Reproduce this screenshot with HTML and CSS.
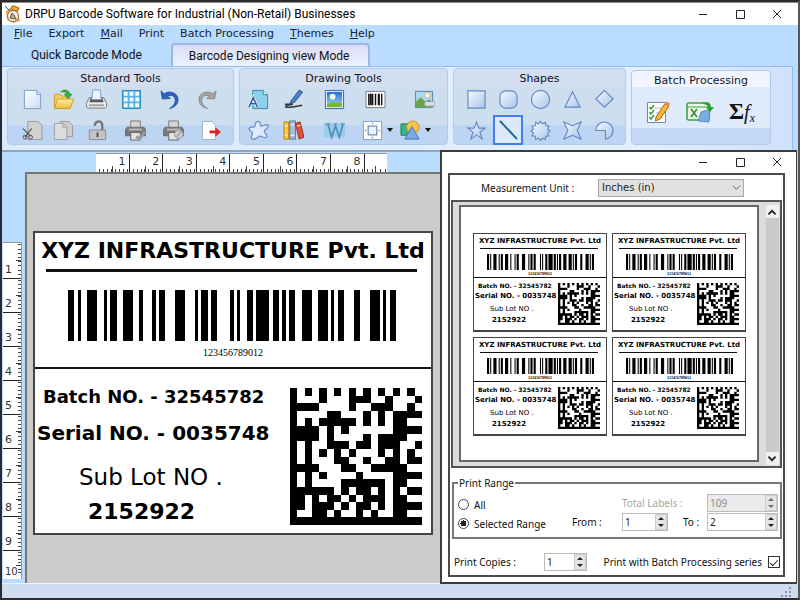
FILE: index.html
```
<!DOCTYPE html>
<html lang="en">
<head>
<meta charset="utf-8">
<title>DRPU Barcode Software for Industrial (Non-Retail) Businesses</title>
<link rel="stylesheet" href="styles.css">
</head>
<body>
<svg class="defs" aria-hidden="true">
  <defs>
    <linearGradient id="blue" x1="0" y1="0" x2="1" y2="1"><stop offset="0" stop-color="#f4f9ff"/><stop offset="1" stop-color="#a9c6ea"/></linearGradient>
    <linearGradient id="paper" x1="0" y1="0" x2="1" y2="1"><stop offset="0" stop-color="#ffffff"/><stop offset="1" stop-color="#c9dcf6"/></linearGradient>
    <linearGradient id="gold" x1="0" y1="0" x2="0" y2="1"><stop offset="0" stop-color="#fff0a8"/><stop offset="1" stop-color="#f0bb38"/></linearGradient>
    <linearGradient id="sky" x1="0" y1="0" x2="0" y2="1"><stop offset="0" stop-color="#1c6fd8"/><stop offset="1" stop-color="#a6dcff"/></linearGradient>
  </defs>
  <symbol id="barcode" viewBox="0 0 101 1" preserveAspectRatio="none">
    <path d="M0 .5H101" stroke="#000" stroke-width="1" stroke-dasharray="2 1 1 2 3 2 1 1 2 2 3 2 1 3 1 1 2 3 3 3 1 1 2 1 2 4 1 1 1 2 2 1 4 1 2 1 1 1 2 2 3 2 3 1 1 1 2 3 2 3 3 1 1 1 2"/>
  </symbol>
  <symbol id="matrix" viewBox="0 0 18 18" preserveAspectRatio="none">
    <path stroke="#000" stroke-width="1" fill="none" d="M0 .5h1m1 0h1m1 0h1m1 0h1m1 0h1m1 0h1m1 0h1m1 0h1m1 0h1
      M0 1.5h1m3 0h1m3 0h3m2 0h1m3 0h1 M0 2.5h4m4 0h1m2 0h3m2 0h1
      M0 3.5h1m4 0h2m3 0h1m1 0h1m1 0h4 M0 4.5h1m1 0h1m1 0h5m1 0h1m1 0h1m1 0h2
      M0 5.5h4m1 0h1m1 0h1m6 0h4 M0 6.5h4m1 0h1m4 0h1m1 0h4
      M0 7.5h1m1 0h1m2 0h3m1 0h2m1 0h3m2 0h1 M0 8.5h1m1 0h1m1 0h1m1 0h1m1 0h1m3 0h1m1 0h1m1 0h1
      M0 9.5h1m1 0h1m3 0h2m2 0h1m2 0h2m1 0h2 M0 10.5h4m3 0h2m2 0h5
      M0 11.5h1m1 0h1m1 0h1m4 0h1m4 0h4 M0 12.5h1m1 0h1m4 0h6m1 0h2
      M0 13.5h6m1 0h1m1 0h2m1 0h1m1 0h1m1 0h2 M0 14.5h2m1 0h1m1 0h2m1 0h1m1 0h3m1 0h2
      M0 15.5h2m1 0h3m1 0h1m1 0h2m1 0h1m1 0h4 M0 16.5h1m2 0h2m1 0h1m2 0h1m1 0h1m2 0h2 M0 17.5h18"/>
  </symbol>
</svg>

<div class="window">
  <header class="titlebar">
    <svg class="app-icon" viewBox="0 0 18 18"><path d="M2 6 10 0 16 3 14 8 16 16 9 18 3 15z" fill="#e3a655"/><circle cx="9" cy="11" r="5.500" fill="#f6efe0" stroke="#9a6a35"/><path d="M1 1l5 5M6 13l2-5 2 2 2 4z" stroke="#555" fill="#c9ae80"/><path d="M8 1l7 2-3 3-5-2z" fill="#f4b233" stroke="#7e4414" stroke-width=".6"/></svg>
    <h1>DRPU Barcode Software for Industrial (Non-Retail) Businesses</h1>
    <div class="controls">
      <button aria-label="Minimize"><svg viewBox="0 0 10 10"><path d="M1 5.500h8"/></svg></button>
      <button aria-label="Maximize"><svg viewBox="0 0 10 10"><path d="M1.500 1.500h8v8h-8z"/></svg></button>
      <button aria-label="Close"><svg viewBox="0 0 10 10"><path d="M1 1l8 8M9 1l-8 8"/></svg></button>
    </div>
  </header>

  <nav class="menu">
    <a href="#"><u>F</u>ile</a><a href="#">Export</a><a href="#"><u>M</u>ail</a><a href="#">Print</a><a href="#">Batch Processing</a><a href="#"><u>T</u>hemes</a><a href="#"><u>H</u>elp</a>
  </nav>

  <div class="tabs">
    <button class="tab">Quick Barcode Mode</button>
    <button class="tab active">Barcode Designing view Mode</button>
  </div>

  <div class="ribbon">
    <section class="group standard">
      <h2>Standard Tools</h2>
      <div class="tools">
        <button aria-label="New"><svg viewBox="0 0 22 22"><path d="M2.500 1.500h13l4 4v15h-17z" fill="url(#paper)" stroke="#7d9cc8"/><path d="M15.500 1.500v4h4" fill="#dbe8fa" stroke="#7d9cc8"/></svg></button>
        <button aria-label="Open"><svg viewBox="0 0 22 22"><path d="M1.500 20V5.500h6l2 2h8V20z" fill="#f6cf62" stroke="#c99a2e"/><path d="M1.500 20.500 5 10.500h16.500l-3.500 10z" fill="url(#gold)" stroke="#c99a2e"/><path d="M8 3c5-4 9-1 9.500 2.500H20L15.500 10 12 5.500h2.500C14 3 11 2.500 8 3z" fill="#35b33a" stroke="#1b8425" stroke-width=".7"/></svg></button>
        <button aria-label="Print"><svg viewBox="0 0 22 22"><path d="M3.500 9h15l3 6v3q0 2-2 2h-17q-2 0-2-2v-3z" fill="#ececec" stroke="#777"/><path d="M5 9h12l1.500 5h-15z" fill="#555b66"/><path d="M7 1h8l1 10H6z" fill="#eaf3ff" stroke="#7f9bc2"/><path d="M3 17h16" stroke="#a5a5a5" stroke-width="2"/></svg></button>
        <button aria-label="Grid"><svg viewBox="0 0 22 22"><path d="M1.500 1.500h19v19h-19z" fill="#58b4e4"/><path fill="#f4fbff" d="M3 3h4v4H3zm6 0h4v4H9zm6 0h4v4h-4zM3 9h4v4H3zm6 0h4v4H9zm6 0h4v4h-4zM3 15h4v4H3zm6 0h4v4H9zm6 0h4v4h-4z"/><path d="M1.500 1.500h19v19h-19z" fill="none" stroke="#2a85bd"/></svg></button>
        <button aria-label="Undo"><svg viewBox="0 0 22 22"><path d="M2 2l1.500 8.500L12 10 9 7.500c4-2 8 0 8 4.500 0 3-2 6-6 8.500 6-1.500 9-5 9-9.500C20 4 11 1 5.500 5z" fill="#2c62bd" stroke="#1a438f" stroke-width=".7"/></svg></button>
        <button aria-label="Redo"><svg viewBox="0 0 22 22"><path d="M20 2l-1.500 8.500L10 10l3-2.500C9 5.500 5 7.500 5 12c0 3 2 6 6 8.500C5 19 2 15.500 2 11 2 4 11 1 16.500 5z" fill="#a3a3a3" stroke="#7a7a7a" stroke-width=".7"/></svg></button>
      </div>
      <div class="tools second">
        <button aria-label="Cut"><svg viewBox="0 0 22 22"><path d="M6 1.500h11l4 4v15H6z" fill="#d0d0d0" stroke="#999"/><path d="M1 9l8 8M10 9l-7 9" stroke="#555" stroke-width="1.200"/><circle cx="3" cy="18" r="2" fill="none" stroke="#555"/><circle cx="9" cy="18" r="2" fill="none" stroke="#555"/></svg></button>
        <button aria-label="Copy"><svg viewBox="0 0 22 22"><path d="M7.500 1.500h9l4 4v12h-13z" fill="#ccc" stroke="#999"/><path d="M1.500 3.500h9l4 4v13h-13z" fill="#dcdcdc" stroke="#a0a0a0"/><path d="M10.500 3.500v4h4" fill="none" stroke="#a0a0a0"/></svg></button>
        <button aria-label="Unlock"><svg viewBox="0 0 22 22"><path d="M8 6c1-6 9-6 8 1v4" fill="none" stroke="#777" stroke-width="2.500"/><path d="M2.500 10.500h17v10h-17z" fill="#c4c4c4" stroke="#888"/><path d="M11 13v5" stroke="#555" stroke-width="2"/></svg></button>
        <button aria-label="Print setup"><svg viewBox="0 0 22 22"><path d="M6 1h10v7H6z" fill="#d5d5d5" stroke="#777"/><path d="M2 7h18l2 3v7H0v-7z" fill="#777"/><path d="M4 10h14" stroke="#bbb" stroke-width="2"/><path d="M6 13h10v8H6z" fill="#e2e2e2" stroke="#666"/><path d="M12 17l3 3 6-8" fill="none" stroke="#999" stroke-width="3"/></svg></button>
        <button aria-label="Edit printer"><svg viewBox="0 0 22 22"><path d="M6 1h10v7H6z" fill="#d5d5d5" stroke="#777"/><path d="M2 7h18l2 3v7H0v-7z" fill="#777"/><path d="M4 10h14" stroke="#bbb" stroke-width="2"/><path d="M6 13h10v8H6z" fill="#e2e2e2" stroke="#666"/><circle cx="16.500" cy="15" r="4.500" fill="#ccc" stroke="#999"/><path d="M14 18l5-6" stroke="#888"/></svg></button>
        <button aria-label="Exit"><svg viewBox="0 0 22 22"><path d="M2.500 1.500h10l4 4v15h-14z" fill="#fcfdff" stroke="#9aaeca"/><path d="M10 11h6V7.500l6 5-6 5V14h-6z" fill="#d8221b"/></svg></button>
      </div>
    </section>

    <section class="group drawing">
      <h2>Drawing Tools</h2>
      <div class="tools">
        <button aria-label="Text"><svg viewBox="0 0 22 22"><path d="M5 1.500h11l4.500 4.500v14.500H5z" fill="#8cd0ec" stroke="#3186b0"/><path d="M16 1.500V6h4.500" fill="#dff5ff" stroke="#3186b0"/><path d="M1 19l4.500-10L10 19M3 15.500h5" fill="none" stroke="#fff" stroke-width="3"/><path d="M1 19l4.500-10L10 19M3 15.500h5" fill="none" stroke="#315a96" stroke-width="1.600"/></svg></button>
        <button aria-label="Pencil"><svg viewBox="0 0 22 22"><path d="M8 13 17 1l3.500 2.500L12 14l-4.500 1.500z" fill="#4a82c4" stroke="#28508c"/><path d="M2 16h7c4 0-8 1-6 3 2 1 9-.5 17-2" fill="none" stroke="#333" stroke-width="1.500"/></svg></button>
        <button aria-label="Picture"><svg viewBox="0 0 22 22"><path d="M1.500 1.500h19v19h-19z" fill="#fff" stroke="#2b5eb0"/><path d="M3 3h16v16H3z" fill="url(#sky)"/><path d="M3 16c5-3 11-2 16-1v4H3z" fill="#79b92c"/><circle cx="9" cy="8" r="3" fill="#fffde0"/></svg></button>
        <button aria-label="Barcode"><svg viewBox="0 0 22 22"><path d="M1 2.500h20v17H1z" fill="#fff" stroke="#777"/><path d="M4 5v12M8 5v12M11 5v12M17.500 5v12" stroke="#111" stroke-width="1.500"/><path d="M6 5v12M14.500 5v12" stroke="#111" stroke-width="2.200"/></svg></button>
        <button aria-label="Image library"><svg viewBox="0 0 22 22"><path d="M1.500 2.500h18v17h-18z" fill="#abd9f2" stroke="#5287a8"/><path d="M2 13l5-4 5 4 4-2 3 3v5H2z" fill="#6aa644"/><circle cx="14" cy="6.500" r="3" fill="#fff2d8" stroke="#d7ac85"/><rect x="11" y="13" width="11" height="5" rx="2" fill="#d9dde3" stroke="#8f98a5"/></svg></button>
      </div>
      <div class="tools second">
        <button aria-label="Freeform"><svg viewBox="0 0 22 22"><path d="M9 2c4-2 4 3 4.500 4.500C17 6 22 3 21 7c-1 3-4 3-4 5s4 3 2.500 6c-1 2-5-1-7-1s-4 4-8 3c-3-1 1-5 0-7C3.500 11.500 0 11 1.500 8.500 3 7 6 8 7 7s0-4 2-5z" fill="#dfeafb" stroke="#688dc8" stroke-width="1.300"/></svg></button>
        <button aria-label="Library"><svg viewBox="0 0 22 22"><path d="M1 2h5v18H1z" fill="#ffc640" stroke="#b88211"/><path d="M7 1h6v19H7z" fill="#a9bddb" stroke="#587099"/><path d="M13 3.500 18 2l4 16-5 2z" fill="#e2503c" stroke="#9c2a1a"/><path d="M2 6h3M2 16h3M8 5h4M8 16h4M14.500 6.500l4-1" stroke="#fff"/></svg></button>
        <button aria-label="WordArt"><svg viewBox="0 0 22 22"><path d="M0 4h22v14H0z" fill="#9dcbe9"/><path d="M4 4l4 14 4-12 4 12 4-14" fill="none" stroke="#4a90be" stroke-width="1.800"/><path d="M1 4h6M10 4h4M17 4h5" stroke="#4a90be"/></svg></button>
        <button class="drop" aria-label="Align"><svg viewBox="0 0 22 22"><path d="M1.500 1.500h19v19h-19z" fill="#fff" stroke="#809bcb"/><path d="M6.500 6.500h9v9h-9z" fill="#eef4ff" stroke="#6d8dbd" stroke-width="1.300"/><path d="M11 3v1.500M11 17.500V19M3 11h1.500M17.500 11H19" stroke="#6d8dbd" stroke-width="1.500"/></svg><i></i></button>
        <button class="drop" aria-label="Arrange"><svg viewBox="0 0 22 22"><path d="M1 4h9v12H1z" fill="#35b681" stroke="#198453"/><circle cx="13.500" cy="7.500" r="6.500" fill="#f7c34f" stroke="#c89021"/><path d="M12.500 7l7.500 13H5z" fill="#7fa9e2" stroke="#4470ad"/></svg><i></i></button>
      </div>
    </section>

    <section class="group shapes">
      <h2>Shapes</h2>
      <div class="tools">
        <button aria-label="Rectangle"><svg viewBox="0 0 22 22"><path d="M2 2h18v18H2z"/></svg></button>
        <button aria-label="Rounded rectangle"><svg viewBox="0 0 22 22"><rect x="2" y="2" width="18" height="18" rx="6"/></svg></button>
        <button aria-label="Circle"><svg viewBox="0 0 22 22"><circle cx="11" cy="11" r="9.500"/></svg></button>
        <button aria-label="Triangle"><svg viewBox="0 0 22 22"><path d="M11 3l8 16H3z"/></svg></button>
        <button aria-label="Diamond"><svg viewBox="0 0 22 22"><path d="M11 1.500 20 10.500 11 19 2 10.500z"/></svg></button>
      </div>
      <div class="tools second">
        <button aria-label="Star"><svg viewBox="0 0 22 22"><path d="M11 2l2.400 6.500H20l-5.300 4.200L17 20l-6-4.400L5 20l2.300-7.300L2 8.500h6.600z"/></svg></button>
        <button class="picked" aria-label="Line"><svg viewBox="0 0 22 22"><path d="M2 1l18 19" stroke-width="2"/></svg></button>
        <button aria-label="Burst"><svg viewBox="0 0 22 22"><path d="M11 1.500l2 2.500 3-1.500.5 3.300 3.300.7L18.500 9.500l2.500 2-2.500 2 1.300 3-3.300.5-.5 3.300-3-1.300-2 2.500-2-2.500-3 1.300-.5-3.300-3.300-.5 1.300-3-2.500-2 2.500-2-1.300-3 3.300-.7.5-3.300 3 1.500z"/></svg></button>
        <button aria-label="Four-point star"><svg viewBox="0 0 22 22"><path d="M2 2 11 6l9-4-4 9 4 9-9-4-9 4 4-9z"/></svg></button>
        <button aria-label="Pie"><svg viewBox="0 0 22 22"><path d="M2 10a9 9 0 1 1 10 10v-9H2z"/></svg></button>
      </div>
    </section>

    <section class="group batch">
      <h2>Batch Processing</h2>
      <div class="tools">
        <button aria-label="Edit list"><svg viewBox="0 0 24 24"><path d="M1.500 2.500h18v20h-18z" fill="#fff" stroke="#7188ad"/><path d="M3.500 7l1.500 2 3-4M3.500 12l1.500 2 3-4M3.500 17l1.500 2 3-4" fill="none" stroke="#35a13b" stroke-width="1.500"/><path d="M9 8h7M10 13h4M10 18h7" stroke="#aab9d0"/><path d="M10 17 19 3.500l4 2.500-9 13-4.500 2z" fill="#f6b931" stroke="#a4651c"/><path d="M19 3.500l1.500-2 3.500 2-1 2.500z" fill="#e88b72"/></svg></button>
        <button class="wide" aria-label="Import spreadsheet"><svg viewBox="0 0 28 24"><rect x="1" y="3" width="22" height="17" rx="2" fill="#e8f7e4" stroke="#43a047" stroke-width="1.600"/><path d="M1 7h22" stroke="#43a047"/><path d="M5 9l6 8M11 9l-6 8" stroke="#338a3a" stroke-width="1.500"/><path d="M15 12l9-3-1 13-11-1z" fill="#75afe0" stroke="#4e83b8" stroke-width=".8"/><path d="M16 4c5-3 9-1 9 3h3l-4 5-4-5h2c0-2-3-3-6-3z" fill="#24a12e"/></svg></button>
        <button class="formula" aria-label="Formula">Σ<em>f<sub>x</sub></em></button>
      </div>
    </section>
  </div>

  <main class="workspace">
    <ol class="ruler across"><li>1</li><li>2</li><li>3</li><li>4</li><li>5</li><li>6</li><li>7</li><li>8</li><li></li></ol>
    <ol class="ruler down"><li>1</li><li>2</li><li>3</li><li>4</li><li>5</li><li>6</li><li>7</li><li>8</li><li>9</li><li>10</li></ol>
    <div class="canvas">
      <article class="label large">
        <h3>XYZ INFRASTRUCTURE Pvt. Ltd</h3>
        <hr>
        <svg class="bars"><use href="#barcode"/></svg>
        <p class="code">123456789012</p>
        <div class="details">
          <div class="lines">
            <p class="lot">Batch NO. - 32545782</p>
            <p class="serial">Serial NO. - 0035748</p>
            <p class="sub">Sub Lot NO .</p>
            <p class="number">2152922</p>
          </div>
          <svg class="dots"><use href="#matrix"/></svg>
        </div>
      </article>
    </div>
  </main>

  <footer class="status"><svg viewBox="0 0 12 12"><path fill="#8796ad" d="M9 1h2v2H9zM5 5h2v2H5zm4 0h2v2H9zM1 9h2v2H1zm4 0h2v2H5zm4 0h2v2H9z"/></svg></footer>
</div>

<div class="dialog" role="dialog" aria-label="Print">
  <div class="controls">
    <button aria-label="Minimize"><svg viewBox="0 0 10 10"><path d="M1 5.500h8"/></svg></button>
    <button aria-label="Maximize"><svg viewBox="0 0 10 10"><path d="M1.500 1.500h8v8h-8z"/></svg></button>
    <button aria-label="Close"><svg viewBox="0 0 10 10"><path d="M1 1l8 8M9 1l-8 8"/></svg></button>
  </div>
  <form class="panel">
    <div class="unit">
      <label for="unit">Measurement Unit :</label>
      <span class="select"><select id="unit"><option>Inches (in)</option></select><svg viewBox="0 0 10 10"><path d="M1 3l4 4 4-4"/></svg></span>
    </div>
    <div class="preview">
      <div class="sheet">
        <article class="label small">
          <h3>XYZ INFRASTRUCTURE Pvt. Ltd</h3><hr>
          <svg class="bars"><use href="#barcode"/></svg>
          <p class="code">123456789012</p>
          <div class="details"><div class="lines"><p class="lot">Batch NO. - 32545782</p><p class="serial">Serial NO. - 0035748</p><p class="sub">Sub Lot NO .</p><p class="number">2152922</p></div><svg class="dots"><use href="#matrix"/></svg></div>
        </article>
        <article class="label small">
          <h3>XYZ INFRASTRUCTURE Pvt. Ltd</h3><hr>
          <svg class="bars"><use href="#barcode"/></svg>
          <p class="code">123456789012</p>
          <div class="details"><div class="lines"><p class="lot">Batch NO. - 32545782</p><p class="serial">Serial NO. - 0035748</p><p class="sub">Sub Lot NO .</p><p class="number">2152922</p></div><svg class="dots"><use href="#matrix"/></svg></div>
        </article>
        <article class="label small">
          <h3>XYZ INFRASTRUCTURE Pvt. Ltd</h3><hr>
          <svg class="bars"><use href="#barcode"/></svg>
          <p class="code">123456789012</p>
          <div class="details"><div class="lines"><p class="lot">Batch NO. - 32545782</p><p class="serial">Serial NO. - 0035748</p><p class="sub">Sub Lot NO .</p><p class="number">2152922</p></div><svg class="dots"><use href="#matrix"/></svg></div>
        </article>
        <article class="label small">
          <h3>XYZ INFRASTRUCTURE Pvt. Ltd</h3><hr>
          <svg class="bars"><use href="#barcode"/></svg>
          <p class="code">123456789012</p>
          <div class="details"><div class="lines"><p class="lot">Batch NO. - 32545782</p><p class="serial">Serial NO. - 0035748</p><p class="sub">Sub Lot NO .</p><p class="number">2152922</p></div><svg class="dots"><use href="#matrix"/></svg></div>
        </article>
      </div>
      <div class="scroll">
        <button type="button" aria-label="Scroll up"><svg viewBox="0 0 10 10"><path d="M2 7l3-3 3 3"/></svg></button>
        <span></span>
        <button type="button" aria-label="Scroll down"><svg viewBox="0 0 10 10"><path d="M2 3l3 3 3-3"/></svg></button>
      </div>
    </div>
    <fieldset>
      <legend>Print Range</legend>
      <label class="choice all"><input type="radio" name="range">All</label>
      <label class="choice selected"><input type="radio" name="range" checked>Selected Range</label>
      <label class="total off" for="total">Total Labels :</label>
      <span class="spin total-box off"><input id="total" type="text" value="109" disabled><span><button type="button" aria-label="More" disabled></button><button type="button" aria-label="Fewer" disabled></button></span></span>
      <label class="from" for="from">From :</label>
      <span class="spin from-box"><input id="from" type="text" value="1"><span><button type="button" aria-label="More"></button><button type="button" aria-label="Fewer"></button></span></span>
      <label class="to" for="to">To :</label>
      <span class="spin to-box"><input id="to" type="text" value="2"><span><button type="button" aria-label="More"></button><button type="button" aria-label="Fewer"></button></span></span>
    </fieldset>
    <div class="bottom">
      <label for="copies">Print Copies :</label>
      <span class="spin"><input id="copies" type="text" value="1"><span><button type="button" aria-label="More"></button><button type="button" aria-label="Fewer"></button></span></span>
      <label class="series">Print with Batch Processing series<input type="checkbox" checked></label>
    </div>
  </form>
</div>
</body>
</html>
```

FILE: styles.css
```
* { box-sizing: border-box; }
body { margin: 0; background: #2b2a2e; font: 11px/14px "DejaVu Sans", sans-serif; color: #111; position: relative; }
h1, h2, h3, p, ol { margin: 0; padding: 0; list-style: none; font-weight: normal; }
button { border: 0; padding: 0; background: none; font: inherit; color: inherit; }
.defs { position: absolute; width: 0; height: 0; }

.window { min-height: 100vh; display: flex; flex-direction: column; border: 2px solid #2b2a2e; border-right-color: #55565a; background: #b9dcff; }

.titlebar { display: flex; align-items: center; height: 23px; background: #fff; border-top: 1px solid #8d8d8d; gap: 3px; }
.app-icon { width: 18px; height: 18px; margin-left: 2px; }
h1 { font: 12px/20px Roboto, sans-serif; color: #000; white-space: nowrap; }
.controls { display: flex; margin-left: auto; }
.controls button { width: 37px; height: 20px; display: grid; place-items: center; }
.controls svg { width: 10px; height: 10px; fill: none; stroke: #222; }
.titlebar .controls { padding-right: 3px; }

.menu { display: flex; height: 18px; align-items: center; gap: 16px; padding-left: 12px; }
.menu a { color: #15233a; text-decoration: none; white-space: nowrap; }

.tabs { display: flex; height: 23px; font: 12px/20px Roboto, sans-serif; color: #101018; }
.tab { padding: 0 29px; white-space: nowrap; }
.tab.active { border: 2px solid #9db6e6; border-bottom: 0; border-radius: 4px 4px 0 0; background: linear-gradient(#dcdcf5, #eaf2ff); padding: 0 18px 0 16px; }

.ribbon { display: flex; align-items: flex-start; gap: 5px; height: 84px; margin-right: 5px; padding: 1px 5px; border-top: 1px solid #98b9ea; border-right: 1px solid #98b9ea; background: linear-gradient(90deg, #d9eaff, #e2efff 80%, #cfe2fb); }
.group { height: 77px; border: 1px solid #b3c9ea; border-radius: 4px; background: linear-gradient(#d3def0 0 18px, #cddfee 18px 75%, #bdd5f3 75%); }
.group h2 { font-size: 11px; line-height: 20px; text-align: center; color: #10101c; }
.standard { width: 227px; }
.drawing { width: 209px; }
.shapes { width: 173px; }
.batch { width: 140px; height: 75px; margin-top: 2px; background: linear-gradient(#f1f5ff 0 16px, #dfeafa 16px 78%, #c5d9f7 78%); }
.tools { display: grid; grid-auto-rows: 20px; align-items: center; justify-items: center; }
.tools.second { margin-top: 11px; }
.tools svg { display: block; width: 21px; height: 21px; }
.standard .tools { grid-template-columns: 32px 31px 34px 37px 38px 38px; padding-left: 8px; }
.standard .second { grid-template-columns: 32px 30px 38px 38px 39px 35px; }
.drawing .tools { grid-template-columns: 36px 34px 48px 34px 64px; }
.drawing .second { grid-template-columns: 36px 34px 48px 38px 38px; }
.drop { display: flex; align-items: center; gap: 4px; }
.drop i { border: 3px solid transparent; border-top: 4px solid #111; border-bottom: 0; }
.shapes .tools { grid-template-columns: repeat(5, 32px); padding-left: 6px; }
.shapes svg { fill: url(#blue); stroke: #6388c6; stroke-width: 1.2px; }
.shapes .picked { display: grid; place-items: center; align-self: center; width: 30px; height: 30px; border: 2px solid #3f7df0; background: #dbe9fa; }
.picked svg { stroke: #19639c; stroke-width: 2px; }
.batch .tools { grid-template-columns: repeat(3, 42px); grid-auto-rows: 26px; padding-left: 5px; margin-top: 8px; }
.batch svg { width: 24px; height: 24px; }
.batch .wide svg { width: 28px; }
.formula { font: bold 23px/24px "Liberation Serif", serif; white-space: nowrap; }
.formula em { font-size: 20px; font-weight: normal; }
.formula sub { font-size: 12px; vertical-align: -3px; line-height: 8px; }

.workspace { flex: 1; display: grid; grid-template-columns: 23px 1fr; grid-template-rows: 20px 1fr; border-top: 2px solid #8fa6bd; margin-right: 5px; }
.ruler { display: grid; background: #fff; font-size: 11px; color: #333; }
.ruler li { background-repeat: no-repeat; }
.across { grid-column: 2; width: 291px; margin: 1px 0 0 71px; grid-template-columns: repeat(8, 3fr) 2fr; border-top: 1px solid #999; }
.across li { text-align: right; padding-right: 3px; line-height: 15px; border-right: 1px solid #222; background-image: repeating-linear-gradient(90deg, transparent 0 9%, #444 9% 12%), linear-gradient(#444, #444); background-size: 100% 3px, 1px 6px; background-position: 0 100%, 50% 100%; }
.across li:last-child { border: 0; }
.down { grid-column: 1; align-self: start; width: 19px; margin: 70px 0 0 1px; grid-template-rows: 36px repeat(8, 34px) 28px; border-top: 1px solid #999; border-right: 1px solid #999; }
.down li { display: flex; align-items: flex-end; padding: 0 0 1px 2px; line-height: 14px; border-bottom: 1px solid #222; background-image: repeating-linear-gradient(0deg, transparent 0 9%, #444 9% 12%), linear-gradient(#444, #444); background-size: 3px 100%, 5px 1px; background-position: 100% 0, 100% 50%; }
.down li:last-child { border: 0; font-size: 10px; padding-bottom: 0; }
.canvas { background: #cbcbcb; border: 2px solid #777; border-right: 0; border-bottom: 0; padding: 57px 0 48px 6px; }

.label { background: #fff; border: 2px solid #444; color: #000; white-space: nowrap; }
.label h3, .label p { font-weight: bold; }
.label hr { border: 0; background: #111; margin: 0; }
.label svg { display: block; shape-rendering: crispEdges; }
.label .details { display: flex; justify-content: space-between; border-top: 2px solid #111; }
.label .code { font-family: "Liberation Serif", serif; font-weight: normal; text-align: center; }
.label .sub { font-weight: normal; }
.label use { width: 100%; height: 100%; }

.large { width: 400px; height: 304px; }
.large h3 { font-size: 22px; line-height: 36px; text-align: center; }
.large hr { height: 3px; margin: 0 14px 0 11px; }
.large .bars { width: 328px; height: 51px; margin: 18px 0 0 33px; }
.large .code { font-size: 10px; line-height: 24px; }
.large .details { margin-top: 2px; padding: 19px 9px 0 2px; }
.large .dots { width: 132px; height: 137px; }
.large .lot { font-size: 18px; line-height: 18px; padding-left: 6px; }
.large .serial { font-size: 20px; line-height: 54px; }
.large .sub { font-size: 23px; line-height: 34px; padding-left: 42px; }
.large .number { font-size: 22px; line-height: 36px; padding-left: 51px; }

.status { height: 15px; display: flex; justify-content: flex-end; background: #cfdcf0; border-top: 1px solid #eef4ff; padding: 2px 6px 0 0; }
.status svg { width: 12px; height: 12px; }

.dialog { position: absolute; left: 55%; right: 3px; top: 150px; bottom: 16px; display: flex; flex-direction: column; padding: 0 11px 5px 6px; background: #fff; border: 2px solid #3c3c3c; border-right-width: 1px; font: 10px/14px "Noto Sans", sans-serif; }
.dialog .controls { margin-right: -10px; height: 21px; }
.panel { flex: 1; display: flex; flex-direction: column; margin: 0; border: 2px solid #4a4a4a; white-space: nowrap; }
.unit { display: flex; align-items: center; justify-content: space-between; height: 25px; padding: 0 39px 0 31px; }
.select { display: grid; width: 146px; height: 18px; }
.select > * { grid-area: 1 / 1; }
.select select { appearance: none; border: 1px solid #aaa; border-radius: 0; background: #e1e1e1; font: 10px/14px "DejaVu Sans", sans-serif; padding: 0 3px; color: #222; }
.select svg { width: 9px; height: 9px; justify-self: end; align-self: center; margin-right: 3px; fill: none; stroke: #555; pointer-events: none; }
.preview { display: flex; justify-content: space-between; height: 268px; margin: 0 1px; padding: 3px 1px 4px 6px; border: 2px solid #555; background: #dcdcdc; }
.sheet { display: grid; grid-template-columns: 134px 134px; grid-auto-rows: 99px; gap: 5px; align-content: start; width: 300px; border: 2px solid #666; background: #fff; padding: 26px 0 0 12px; }
.scroll { display: flex; flex-direction: column; width: 13px; background: #f0f0f0; margin-bottom: -3px; }
.scroll span { flex: 1; background: #cacaca; }
.scroll button { height: 13px; }
.scroll svg { display: block; width: 12px; height: 12px; fill: none; stroke: #222; stroke-width: 1.5px; }

.small { font-family: "DejaVu Sans", sans-serif; border-width: 1px; border-bottom-width: 2px; }
.small h3 { font-size: 7px; line-height: 14px; text-align: center; }
.small hr { height: 1px; margin: 0 8px 0 6px; }
.small .bars { width: 107px; height: 16px; margin: 5px 0 0 13px; shape-rendering: auto; }
.small .code { font-size: 4px; line-height: 7px; font-weight: bold; }
.small .details { padding: 5px 6px 0 1px; border-top-width: 1px; }
.small .dots { width: 42px; height: 42px; shape-rendering: auto; }
.small .lines { width: 0; flex: 1; font-size: 6px; line-height: 6px; }
.small .lot { padding-left: 3px; }
.small .serial { font-size: 7px; line-height: 14px; }
.small .sub { font-size: 7px; line-height: 12px; padding-left: 15px; }
.small .number { font-size: 7px; line-height: 10px; padding-left: 17px; }

fieldset { display: grid; grid-template-columns: 1fr 50px 46px 39px 71px; grid-template-rows: 18px 18px; row-gap: 1px; align-items: center; margin: 8px 1px 0 2px; padding: 4px 2px 6px 4px; border: 2px solid #777; min-width: 0; }
legend { padding: 0 1px; line-height: 14px; }
.choice { display: flex; align-items: center; gap: 5px; grid-column: 1; padding-top: 3px; }
.all { grid-row: 1; }
.selected { grid-row: 2; }
.total { grid-area: 1 / 3 / 2 / 5; }
.total-box { grid-area: 1 / 5; }
.from { grid-area: 2 / 2; }
.from-box { grid-area: 2 / 3; }
.to { grid-area: 2 / 4; padding-left: 15px; }
.to-box { grid-area: 2 / 5; }
.off { color: #a5a5a5; }
input { margin: 0; font: inherit; color: #222; }
input[type="radio"] { appearance: none; width: 11px; height: 11px; border: 1px solid #444; border-radius: 50%; background: #fff; }
input[type="radio"]:checked { background: radial-gradient(#222 0 3px, #fff 3px); }
.spin { display: flex; height: 18px; border: 1px solid #bbb; background: #fff; }
.spin input { flex: 1; width: 0; min-width: 0; border: 0; padding: 0 2px; background: none; }
.spin > span { display: grid; width: 12px; background: #e4e4e4; border: 1px solid #ccc; }
.spin button { display: grid; place-items: center; }
.spin button::before { content: ""; border: 3px solid transparent; border-top: 0; border-bottom: 3px solid #222; }
.spin button:last-child::before { border-bottom: 0; border-top: 3px solid #222; }
.spin.off { background: #ebebeb; }
.off input { color: #888; }
.off button::before { opacity: .6; }
.bottom { display: flex; flex: 1; align-items: center; padding: 10px 3px 0 4px; }
.bottom .spin { width: 43px; margin-left: 28px; }
.series { display: flex; align-items: center; gap: 6px; margin-left: auto; }
input[type="checkbox"] { appearance: none; display: grid; place-items: center; width: 12px; height: 12px; border: 1px solid #333; background: #fff; }
input[type="checkbox"]:checked::before { content: ""; width: 7px; height: 3px; border: solid #222; border-width: 0 0 1px 1px; rotate: -45deg; }
```
